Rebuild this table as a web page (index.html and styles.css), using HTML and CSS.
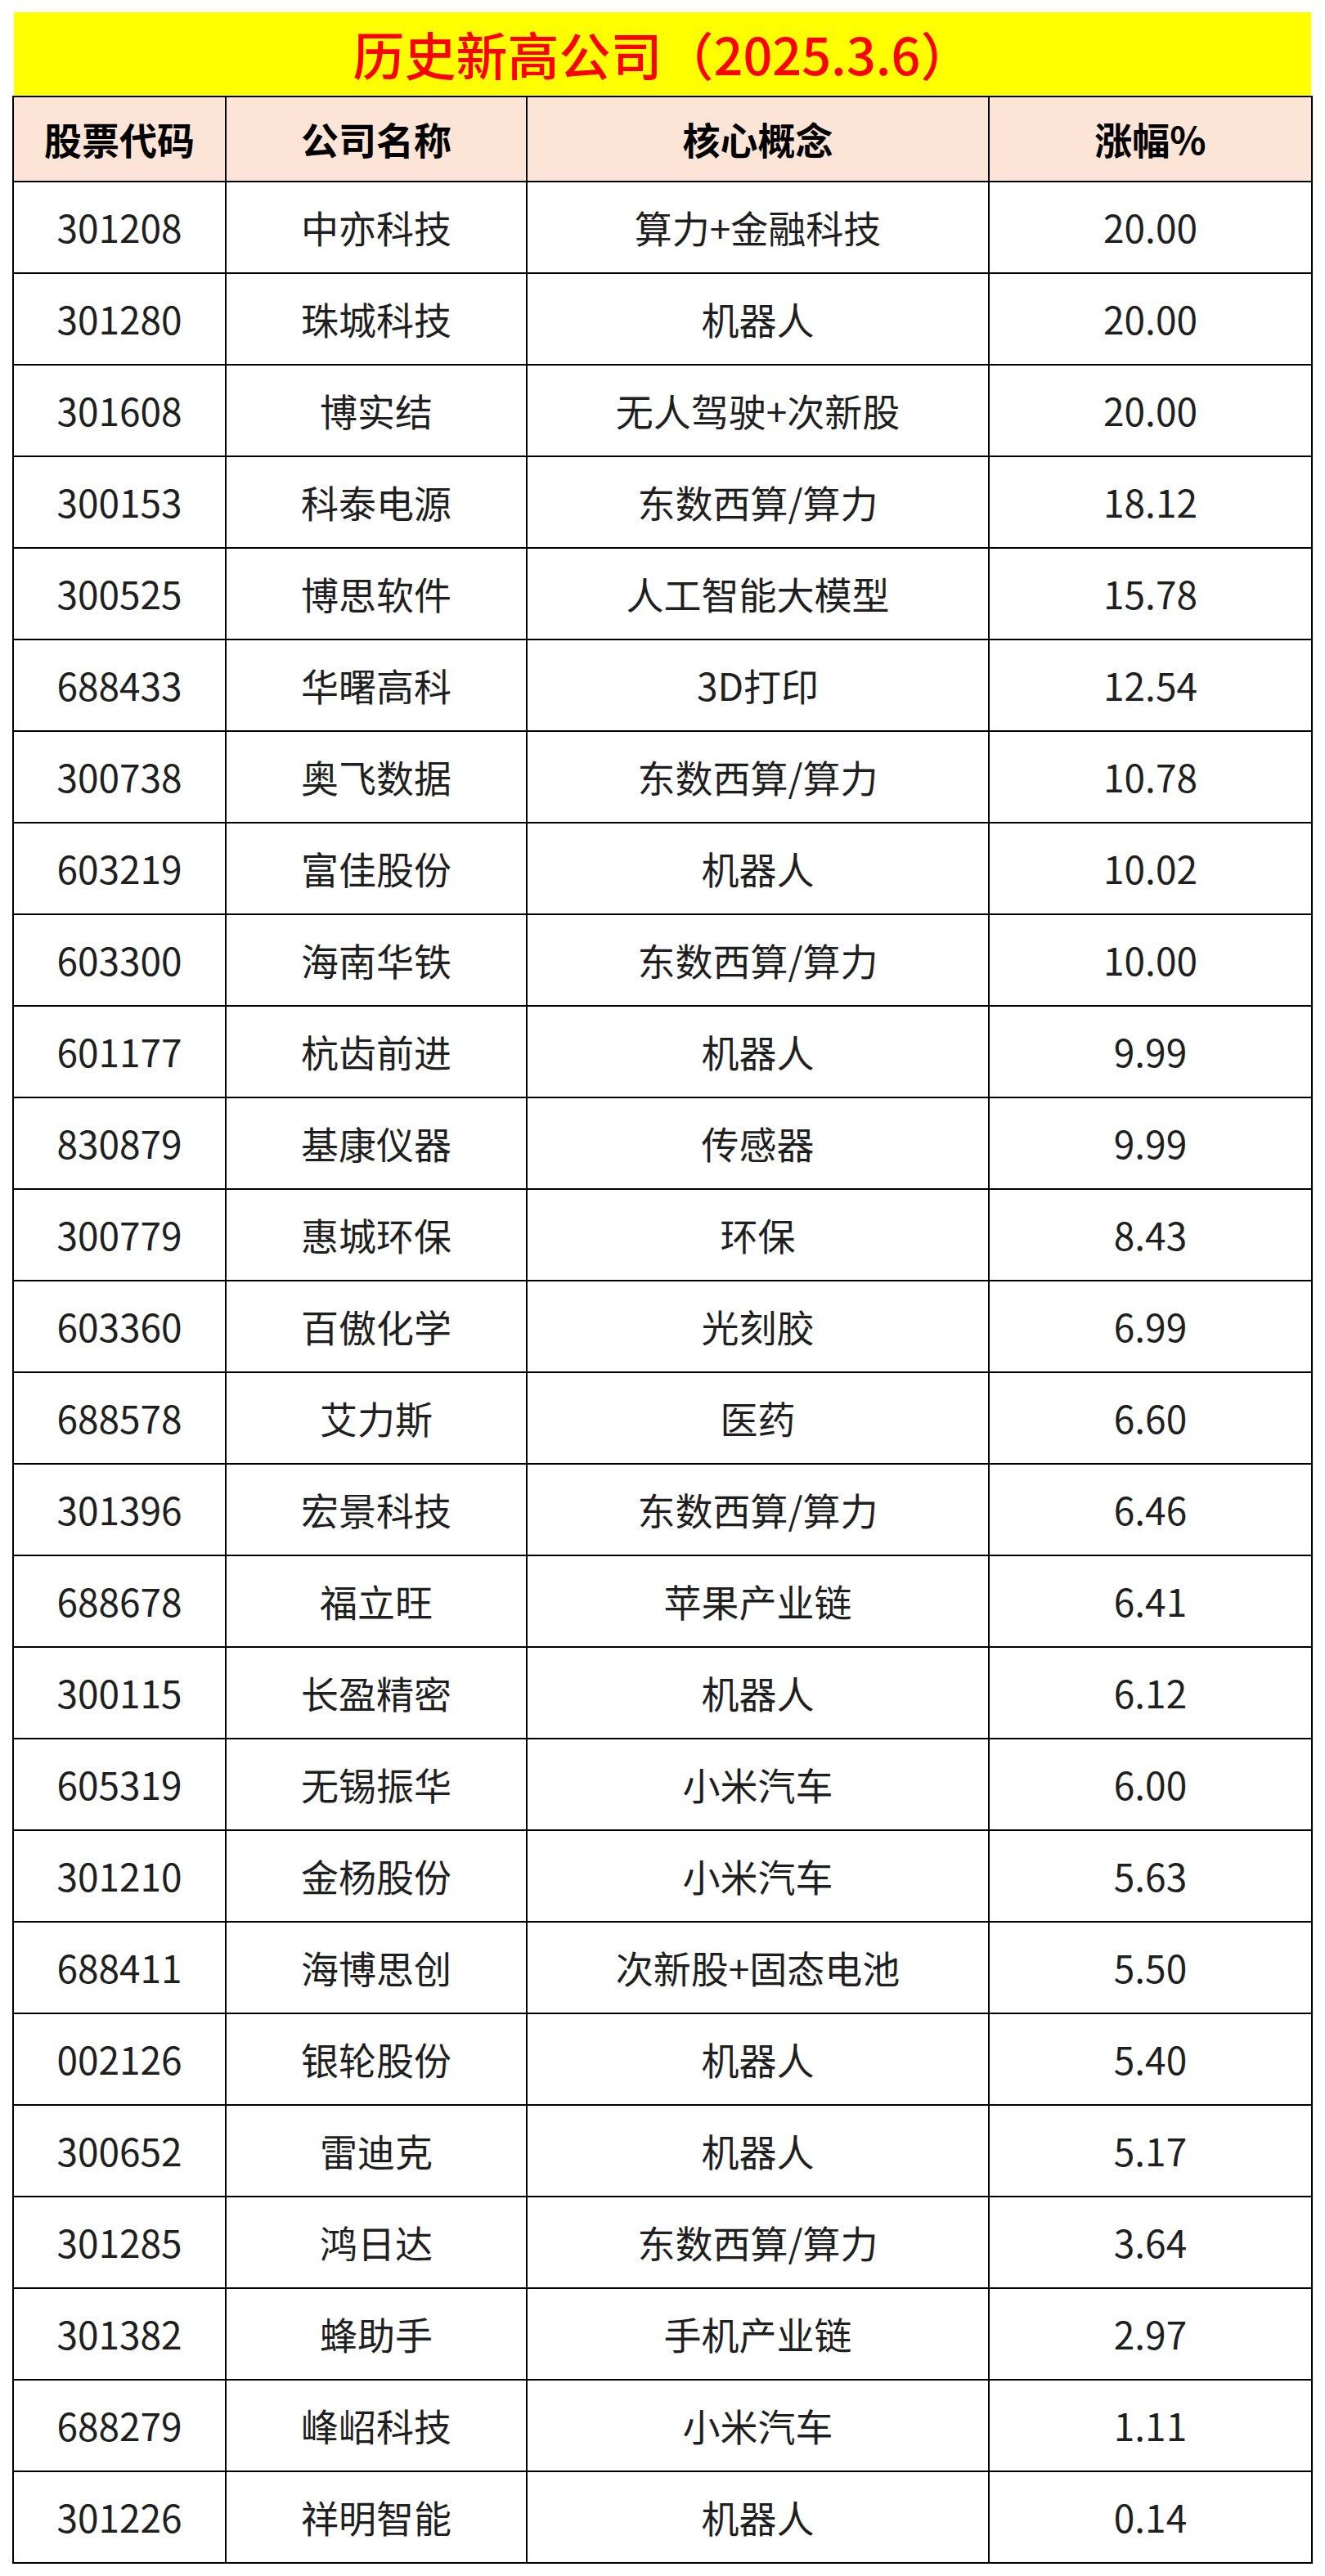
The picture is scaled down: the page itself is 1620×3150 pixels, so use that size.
FILE: index.html
```html
<!DOCTYPE html>
<html lang="zh-CN">
<head>
<meta charset="utf-8">
<title>历史新高公司</title>
<link rel="stylesheet" href="styles.css">
</head>
<body>
<div class="sheet">
  <div class="title">历史新高公司（2025.3.6）</div>
  <div class="table">
    <div class="row head">
      <div class="cell">股票代码</div><div class="cell">公司名称</div><div class="cell">核心概念</div><div class="cell">涨幅%</div>
    </div>
    <div class="row"><div class="cell">301208</div><div class="cell">中亦科技</div><div class="cell">算力+金融科技</div><div class="cell">20.00</div></div>
    <div class="row"><div class="cell">301280</div><div class="cell">珠城科技</div><div class="cell">机器人</div><div class="cell">20.00</div></div>
    <div class="row"><div class="cell">301608</div><div class="cell">博实结</div><div class="cell">无人驾驶+次新股</div><div class="cell">20.00</div></div>
    <div class="row"><div class="cell">300153</div><div class="cell">科泰电源</div><div class="cell">东数西算/算力</div><div class="cell">18.12</div></div>
    <div class="row"><div class="cell">300525</div><div class="cell">博思软件</div><div class="cell">人工智能大模型</div><div class="cell">15.78</div></div>
    <div class="row"><div class="cell">688433</div><div class="cell">华曙高科</div><div class="cell">3D打印</div><div class="cell">12.54</div></div>
    <div class="row"><div class="cell">300738</div><div class="cell">奥飞数据</div><div class="cell">东数西算/算力</div><div class="cell">10.78</div></div>
    <div class="row"><div class="cell">603219</div><div class="cell">富佳股份</div><div class="cell">机器人</div><div class="cell">10.02</div></div>
    <div class="row"><div class="cell">603300</div><div class="cell">海南华铁</div><div class="cell">东数西算/算力</div><div class="cell">10.00</div></div>
    <div class="row"><div class="cell">601177</div><div class="cell">杭齿前进</div><div class="cell">机器人</div><div class="cell">9.99</div></div>
    <div class="row"><div class="cell">830879</div><div class="cell">基康仪器</div><div class="cell">传感器</div><div class="cell">9.99</div></div>
    <div class="row"><div class="cell">300779</div><div class="cell">惠城环保</div><div class="cell">环保</div><div class="cell">8.43</div></div>
    <div class="row"><div class="cell">603360</div><div class="cell">百傲化学</div><div class="cell">光刻胶</div><div class="cell">6.99</div></div>
    <div class="row"><div class="cell">688578</div><div class="cell">艾力斯</div><div class="cell">医药</div><div class="cell">6.60</div></div>
    <div class="row"><div class="cell">301396</div><div class="cell">宏景科技</div><div class="cell">东数西算/算力</div><div class="cell">6.46</div></div>
    <div class="row"><div class="cell">688678</div><div class="cell">福立旺</div><div class="cell">苹果产业链</div><div class="cell">6.41</div></div>
    <div class="row"><div class="cell">300115</div><div class="cell">长盈精密</div><div class="cell">机器人</div><div class="cell">6.12</div></div>
    <div class="row"><div class="cell">605319</div><div class="cell">无锡振华</div><div class="cell">小米汽车</div><div class="cell">6.00</div></div>
    <div class="row"><div class="cell">301210</div><div class="cell">金杨股份</div><div class="cell">小米汽车</div><div class="cell">5.63</div></div>
    <div class="row"><div class="cell">688411</div><div class="cell">海博思创</div><div class="cell">次新股+固态电池</div><div class="cell">5.50</div></div>
    <div class="row"><div class="cell">002126</div><div class="cell">银轮股份</div><div class="cell">机器人</div><div class="cell">5.40</div></div>
    <div class="row"><div class="cell">300652</div><div class="cell">雷迪克</div><div class="cell">机器人</div><div class="cell">5.17</div></div>
    <div class="row"><div class="cell">301285</div><div class="cell">鸿日达</div><div class="cell">东数西算/算力</div><div class="cell">3.64</div></div>
    <div class="row"><div class="cell">301382</div><div class="cell">蜂助手</div><div class="cell">手机产业链</div><div class="cell">2.97</div></div>
    <div class="row"><div class="cell">688279</div><div class="cell">峰岹科技</div><div class="cell">小米汽车</div><div class="cell">1.11</div></div>
    <div class="row"><div class="cell">301226</div><div class="cell">祥明智能</div><div class="cell">机器人</div><div class="cell">0.14</div></div>
  </div>
</div>
</body>
</html>
```

FILE: styles.css
```css
html, body {
  margin: 0;
  padding: 0;
  background: #ffffff;
}

body {
  font-family: "Noto Sans CJK SC", "Noto Sans", sans-serif;
  color: #1f1f1f;
}

.sheet {
  padding: 15px 15px 0 15px;
  width: 1590px;
}

.title {
  margin: 0 2px;
  height: 102px;
  background: #ffff00;
  color: #ff0000;
  font-size: 63px;
  font-weight: 500;
  display: flex;
  align-items: center;
  justify-content: center;
  line-height: 1;
  padding-bottom: 4px;
  box-sizing: border-box;
}

.table {
  width: 1590px;
  box-sizing: border-box;
  border-left: 2px solid #000;
  border-top: 2px solid #000;
}

.row {
  display: grid;
  grid-template-columns: 260px 368px 565px 395px;
  height: 112px;
}

.cell {
  box-sizing: border-box;
  border-right: 2px solid #000;
  border-bottom: 2px solid #000;
  display: flex;
  align-items: center;
  justify-content: center;
  font-size: 46px;
  line-height: 1;
  padding-bottom: 2px;
}

.head {
  height: 104px;
}

.head .cell {
  background: #fce4d6;
  font-weight: 700;
  color: #000;
}
```
